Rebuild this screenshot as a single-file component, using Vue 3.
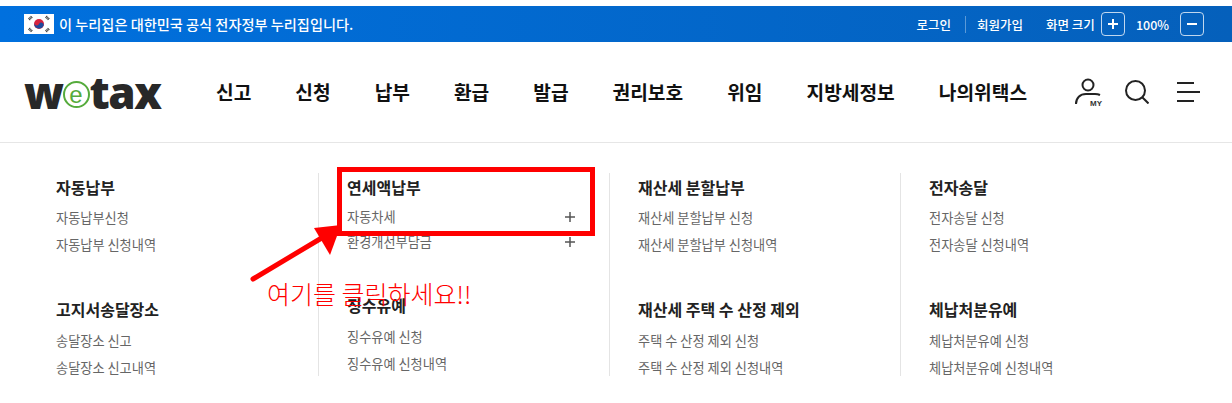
<script setup>
const nav = ['신고', '신청', '납부', '환급', '발급', '권리보호', '위임', '지방세정보', '나의위택스']

const columns = [
  [
    { title: '자동납부', links: ['자동납부신청', '자동납부 신청내역'] },
    { title: '고지서송달장소', links: ['송달장소 신고', '송달장소 신고내역'] },
  ],
  [
    { title: '연세액납부', links: ['자동차세', '환경개선부담금'], more: true },
    { title: '징수유예', links: ['징수유예 신청', '징수유예 신청내역'] },
  ],
  [
    { title: '재산세 분할납부', links: ['재산세 분할납부 신청', '재산세 분할납부 신청내역'] },
    { title: '재산세 주택 수 산정 제외', links: ['주택 수 산정 제외 신청', '주택 수 산정 제외 신청내역'] },
  ],
  [
    { title: '전자송달', links: ['전자송달 신청', '전자송달 신청내역'] },
    { title: '체납처분유예', links: ['체납처분유예 신청', '체납처분유예 신청내역'] },
  ],
]
</script>

<template>
  <div class="page">
    <div class="topbar">
      <div class="gov">
        <svg class="flag" viewBox="0 0 30 20" width="30" height="20">
          <rect width="30" height="20" fill="#fff" />
          <circle cx="15" cy="10" r="5" fill="#d8233f" />
          <path d="M10.3 8.4a5 5 0 0 0 9.4 3.2 2.5 2.5 0 0 0-4.7-1.6 2.5 2.5 0 0 1-4.7-1.6z" fill="#1f4a9c" />
          <g stroke="#333" stroke-width="2.6" stroke-dasharray="1 .5">
            <path d="M5 5.500l3-3" />
            <path d="M22 2.500l3 3" />
            <path d="M5 14.500l3 3" />
            <path d="M22 17.500l3-3" />
          </g>
        </svg>
        <span>이 누리집은 대한민국 공식 전자정부 누리집입니다.</span>
      </div>
      <div class="util">
        <a class="login">로그인</a>
        <i class="sep"></i>
        <a class="join">회원가입</a>
        <span class="zoom-label">화면 크기</span>
        <button class="zoom-btn" type="button">
          <svg viewBox="0 0 12 12" width="12" height="12"><path d="M1 6h10M6 1v10" stroke="#fff" stroke-width="2" /></svg>
        </button>
        <span class="percent">100%</span>
        <button class="zoom-btn" type="button">
          <svg viewBox="0 0 12 12" width="12" height="12"><path d="M1 6h10" stroke="#fff" stroke-width="2" /></svg>
        </button>
      </div>
    </div>

    <header class="header">
      <div class="logo">
        <span>w</span><i class="logo-e">e</i><span>tax</span>
      </div>
      <nav class="nav">
        <a v-for="item in nav" :key="item">{{ item }}</a>
      </nav>
      <div class="tools">
        <svg class="tool-my" width="30" height="29" viewBox="0 0 30 29" fill="none" stroke="#222" stroke-width="2">
          <circle cx="13" cy="7" r="5.500" />
          <path d="M1 26c0-6 4-10 10-10h9c2 0 4 .5 5 1" />
          <text x="15" y="28" class="my">MY</text>
        </svg>
        <svg class="tool-search" width="24" height="24" viewBox="0 0 24 24" fill="none" stroke="#222" stroke-width="2">
          <circle cx="10.500" cy="10.500" r="9.500" />
          <path d="M17.500 17.500l6 6" />
        </svg>
        <svg class="tool-menu" width="23" height="20" viewBox="0 0 23 20" fill="none" stroke="#222" stroke-width="2">
          <path d="M0 1h17M0 10h23M0 19h17" />
        </svg>
      </div>
    </header>

    <main class="menu">
      <section v-for="(col, i) in columns" :key="i" class="col">
        <div v-for="group in col" :key="group.title" class="group">
          <h3>{{ group.title }}</h3>
          <a v-for="link in group.links" :key="link" class="link" :class="{ tight: group.more }">
            {{ link }}
            <svg v-if="group.more" viewBox="0 0 10 10" width="10" height="10">
              <path d="M0 5h10M5 0v10" stroke="#555" stroke-width="1.500" />
            </svg>
          </a>
        </div>
      </section>
    </main>

    <div class="mark-box"></div>
    <svg class="mark-arrow" width="100" height="70" viewBox="0 0 100 70">
      <path d="M4 57L76 14" stroke="#f00" stroke-width="5" stroke-linecap="round" />
      <path d="M92 3L65 6L81 33z" fill="#f00" />
    </svg>
    <div class="mark-text">여기를 클릭하세요!!</div>
  </div>
</template>

<style>
html,
body {
  margin: 0;
  background: #fff;
}
</style>

<style scoped>
.page {
  position: relative;
  width: 1232px;
  height: 403px;
  overflow: hidden;
  padding-top: 6px;
  box-sizing: border-box;
  font-family: "Noto Sans CJK KR", "Noto Sans", sans-serif;
  background: #fff;
}

.topbar {
  height: 36px;
  display: flex;
  align-items: center;
  justify-content: space-between;
  padding: 0 28px 0 24px;
  background: linear-gradient(90deg, #0070de, #0560bb);
  color: #fff;
}

.gov {
  display: flex;
  align-items: center;
  gap: 5px;
  font-size: 14.200px;
  font-weight: 500;
}

.flag {
  display: block;
}

.util {
  display: flex;
  align-items: center;
  font-size: 12.500px;
  font-weight: 500;
}

.sep {
  width: 1px;
  height: 17px;
  margin: 0 11px 0 14px;
  background: rgba(255, 255, 255, 0.35);
}

.zoom-label {
  margin-left: 23px;
  margin-right: 6px;
}

.percent {
  margin: 0 11px;
}

.zoom-btn {
  width: 24px;
  height: 24px;
  padding: 0;
  display: flex;
  align-items: center;
  justify-content: center;
  background: transparent;
  border: 1px solid rgba(255, 255, 255, 0.75);
  border-radius: 4px;
}

.header {
  height: 101px;
  display: flex;
  align-items: center;
  padding: 0 32px 0 24px;
  border-bottom: 1px solid #e6e6e6;
  box-sizing: border-box;
}

.logo {
  width: 192px;
  display: flex;
  align-items: center;
  font-family: "Open Sans", sans-serif;
  font-size: 44px;
  font-weight: 800;
  line-height: 1;
  letter-spacing: -1.500px;
  color: #282828;
}

.logo-e {
  width: 27px;
  height: 27px;
  margin: 5px 0 0 0;
  display: flex;
  align-items: center;
  justify-content: center;
  border: 2px solid #55ab3c;
  border-radius: 50%;
  box-sizing: border-box;
  font-family: "Liberation Sans", sans-serif;
  font-size: 24px;
  font-style: normal;
  font-weight: 400;
  letter-spacing: 0;
  color: #55ab3c;
}

.nav {
  display: flex;
  gap: 44px;
  font-size: 19.200px;
  font-weight: 700;
  color: #111;
  white-space: nowrap;
}

.tools {
  margin-left: auto;
  display: flex;
  align-items: center;
}

.tool-search {
  margin-left: 20px;
}

.tool-menu {
  margin-left: 28px;
}

.my {
  font-family: "Liberation Sans", sans-serif;
  font-size: 8px;
  font-weight: 700;
  fill: #333;
  stroke: none;
}

.menu {
  display: grid;
  grid-template-columns: repeat(4, 291px);
  padding: 30px 0 0 27px;
}

.col {
  height: 203px;
  padding-left: 28px;
  box-sizing: border-box;
  border-left: 1px solid #e4e4e4;
  display: flex;
  flex-direction: column;
  gap: 37px;
}

.col:first-child {
  border-left-color: transparent;
}

.group {
  position: relative;
  height: 85px;
}

h3 {
  margin: 0 0 3px;
  font-size: 16px;
  font-weight: 700;
  line-height: 28px;
  color: #222;
  white-space: nowrap;
}

.group + .group h3 {
  margin-bottom: 4px;
}

.link {
  display: flex;
  align-items: center;
  justify-content: space-between;
  width: 228px;
  height: 27px;
  font-size: 13.200px;
  color: #666;
  white-space: nowrap;
}

.link.tight {
  height: 25px;
}

.mark-box {
  position: absolute;
  left: 337px;
  top: 167px;
  width: 258px;
  height: 69px;
  border: 5px solid #f00;
  box-sizing: border-box;
}

.mark-arrow {
  position: absolute;
  left: 249px;
  top: 222px;
}

.mark-text {
  position: absolute;
  left: 267px;
  top: 276px;
  font-size: 25px;
  line-height: 34px;
  font-weight: 300;
  color: #f00;
  white-space: nowrap;
}
</style>
